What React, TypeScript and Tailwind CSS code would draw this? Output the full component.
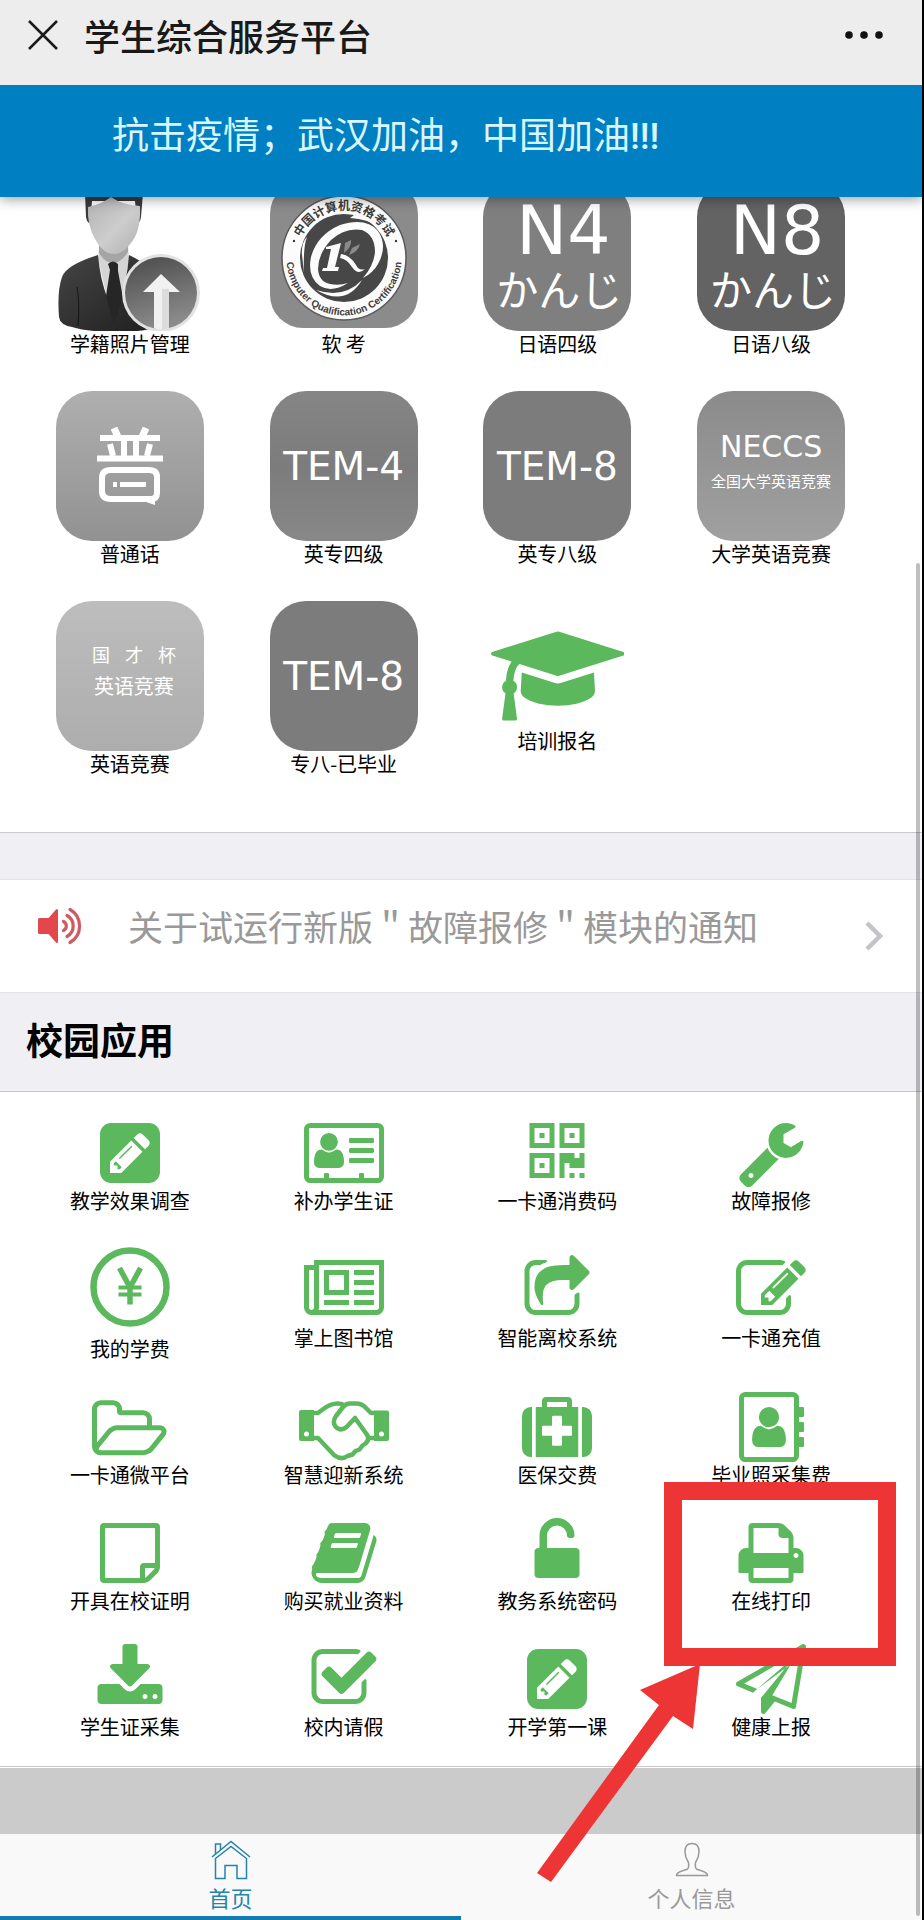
import type { ReactNode } from 'react';

type IconShape = {
  width: number;
  path: string;
};

// Every glyph sits on a grid that is 1792 units tall.
const icons: Record<string, IconShape> = {
  cap: {
    width: 2304,
    path: 'M1774 836l18 316q4 69-82 128t-235 93.5-323 34.5-323-34.5-235-93.5-82-128l18-316 574 181q22 7 48 7t48-7zm530-324q0 23-22 31l-1120 352q-4 1-10 1t-10-1l-652-206q-43 34-71 111.5t-34 178.5q63 36 63 109 0 69-58 107l58 433q2 14-8 25-9 11-24 11h-192q-15 0-24-11-10-11-8-25l58-433q-58-38-58-107 0-73 65-111 11-207 98-330l-333-104q-22-8-22-31t22-31l1120-352q4-1 10-1t10 1l1120 352q22 8 22 31z',
  },
  pencilSquare: {
    width: 1536,
    path: 'M404 1108l152 152-52 52h-56v-96h-96v-56zm414-390q14 13-3 30l-291 291q-17 17-30 3-14-13 3-30l291-291q17-17 30-3zm-274 690l544-544-288-288-544 544v288h288zm608-608l92-92q28-28 28-68t-28-68l-152-152q-28-28-68-28t-68 28l-92 92zm384-384v960q0 119-84.5 203.5t-203.5 84.5h-960q-119 0-203.5-84.5t-84.5-203.5v-960q0-119 84.5-203.5t203.5-84.5h960q119 0 203.5 84.5t84.5 203.5z',
  },
  idCard: {
    width: 2048,
    path: 'M1024 1131q0-64-9-117.5t-29.5-103-60.5-78-97-28.5q-6 4-30 18t-37.5 21.5-35.5 17.5-43 14.5-42 4.5-42-4.5-43-14.5-35.5-17.5-37.5-21.5-30-18q-57 0-97 28.5t-60.5 78-29.5 103-9 117.5 37 106.5 91 42.5h512q54 0 91-42.5t37-106.5zm-157-520q0-94-66.5-160.5t-160.5-66.5-160.5 66.5-66.5 160.5 66.5 160.5 160.5 66.5 160.5-66.5 66.5-160.5zm925 509v-64q0-14-9-23t-23-9h-576q-14 0-23 9t-9 23v64q0 14 9 23t23 9h576q14 0 23-9t9-23zm0-260v-56q0-15-10.5-25.5t-25.5-10.5h-568q-15 0-25.5 10.5t-10.5 25.5v56q0 15 10.5 25.5t25.5 10.5h568q15 0 25.5-10.5t10.5-25.5zm0-252v-64q0-14-9-23t-23-9h-576q-14 0-23 9t-9 23v64q0 14 9 23t23 9h576q14 0 23-9t9-23zM1920 288v1216q0 13-9.500 22.500t-22.500 9.500h-352v-96q0-14-9-23t-23-9h-64q-14 0-23 9t-9 23v96h-768v-96q0-14-9-23t-23-9h-64q-14 0-23 9t-9 23v96h-352q-13 0-22.500-9.500t-9.500-22.500v-1216q0-13 9.500-22.500t22.500-9.500h1728q13 0 22.500 9.500t9.500 22.500zM2048 288v1216q0 66-47 113t-113 47h-1728q-66 0-113-47t-47-113v-1216q0-66 47-113t113-47h1728q66 0 113 47t47 113z',
  },
  qrcode: {
    width: 1792,
    path: 'M576 1152v128h-128v-128h128zm0-768v128h-128v-128h128zm768 0v128h-128v-128h128zm-1024 1023h384v-383h-384v383zm0-767h384v-384h-384v384zm768 0h384v-384h-384v384zm-256 256v640h-640v-640h640zm512 512v128h-128v-128h128zm256 0v128h-128v-128h128zm0-512v384h-384v-128h-128v384h-128v-640h384v128h128v-128h128zm-768-768v640h-640v-640h640zm768 0v640h-640v-640h640z',
  },
  wrench: {
    width: 1792,
    path: 'M448 1472q0-26-19-45t-45-19-45 19-19 45 19 45 45 19 45-19 19-45zm644-420l-682 682q-37 37-90 37-52 0-91-37l-106-108q-38-36-38-90 0-53 38-91l681-681q39 98 114.5 173.5t173.5 114.5zm634-435q0 39-23 106-47 134-164.5 217.5t-258.5 83.5q-185 0-316.5-131.5t-131.5-316.5 131.5-316.5 316.500-131.5q58 0 121.5 16.5t107.5 46.500q16 11 16 28t-16 28l-293 169v224l193 107q5-3 79-48.5t135.5-81 70.5-35.5q15 0 23.500 10t8.500 25z',
  },
  newspaper: {
    width: 2048,
    path: 'M1024 512h-384v384h384v-384zm128 640v128h-640v-128h640zm0-768v640h-640v-640h640zm640 768v128h-512v-128h512zm0-256v128h-512v-128h512zm0-256v128h-512v-128h512zm0-256v128h-512v-128h512zm-1536 960v-960h-128v960q0 26 19 45t45 19 45-19 19-45zm1664 0v-1088h-1536v1088q0 33-11 64h1483q26 0 45-19t19-45zm128-1216v1216q0 80-56 136t-136 56h-1664q-80 0-136-56t-56-136v-1088h256v-128h1792z',
  },
  share: {
    width: 1792,
    path: 'M1472 989v259q0 119-84.5 203.5t-203.5 84.5h-832q-119 0-203.5-84.5t-84.5-203.5v-832q0-119 84.5-203.5t203.5-84.5h255q13 0 22.5 9.5t9.5 22.5q0 27-26 32-77 26-133 60-10 4-16 4h-112q-66 0-113 47t-47 113v832q0 66 47 113t113 47h832q66 0 113-47t47-113v-214q0-19 18-29 28-13 54-37 16-16 35-8 21 9 21 29zm237-496l-384 384q-18 19-45 19-12 0-25-5-39-17-39-59v-192h-160q-323 0-438 131-119 137-74 473 3 23-20 34-8 2-12 2-16 0-26-13-10-14-21-31t-39.5-68.5-49.5-99.5-38.5-114-17.5-122q0-49 3.5-91t14-90 28-88 47-81.5 68.5-74 94.5-61.5 124.5-48.5 159.5-30.5 196.5-11h160v-192q0-42 39-59 13-5 25-5 26 0 45 19l384 384q19 19 19 45t-19 45z',
  },
  edit: {
    width: 1792,
    path: 'M888 1184l116-116-152-152-116 116v56h96v96h56zm440-720q-16-16-33 1l-350 350q-17 17-1 33t33-1l350-350q17-17 1-33zm80 594v190q0 119-84.5 203.5t-203.5 84.5h-832q-119 0-203.5-84.5t-84.5-203.5v-832q0-119 84.5-203.5t203.5-84.5h832q63 0 117 25 15 7 18 23 3 17-9 29l-49 49q-14 14-32 8-23-6-45-6h-832q-66 0-113 47t-47 113v832q0 66 47 113t113 47h832q66 0 113-47t47-113v-126q0-13 9-22l64-64q15-15 35-7t20 29zm-96-738l288 288-672 672h-288v-288zm444 132l-92 92-288-288 92-92q28-28 68-28t68 28l152 152q28 28 28 68t-28 68z',
  },
  folder: {
    width: 1920,
    path: 'M1781 1013q0-31-53-31h-1088q-40 0-85.5 21.5t-71.5 52.5l-294 363q-18 24-18 40 0 31 53 31h1088q40 0 86-22t71-53l294-363q18-22 18-39zm-1141-159h768v-160q0-40-28-68t-68-28h-576q-40 0-68-28t-28-68v-64q0-40-28-68t-68-28h-320q-40 0-68 28t-28 68v853l256-315q44-53 116-87.5t140-34.5zm1269 159q0 62-46 120l-295 363q-43 53-116 87.5t-140 34.5h-1088q-92 0-158-66t-66-158v-960q0-92 66-158t158-66h320q92 0 158 66t66 158v32h544q92 0 158 66t66 158v160h192q54 0 99 24.5t67 70.5q15 32 15 68z',
  },
  medkit: {
    width: 1792,
    path: 'M1280 1088v-192q0-14-9-23t-23-9h-224v-224q0-14-9-23t-23-9h-192q-14 0-23 9t-9 23v224h-224q-14 0-23 9t-9 23v192q0 14 9 23t23 9h224v224q0 14 9 23t23 9h192q14 0 23-9t9-23v-224h224q14 0 23-9t9-23zm-640-704h512v-128h-512v128zm-384 0v1280h-32q-92 0-158-66t-66-158v-832q0-92 66-158t158-66h32zm1184 0v1280h-1088v-1280h160v-160q0-40 28-68t68-28h576q40 0 68 28t28 68v160h160zm352 224v832q0 92-66 158t-158 66h-32v-1280h32q92 0 158 66t66 158z',
  },
  addressBook: {
    width: 1664,
    path: 'M1028 644q0 107-76.5 183t-183.5 76-183.5-76-76.5-183q0-108 76.5-184t183.5-76 183.5 76 76.5 184zm-48 220q46 0 82.5 17t60 47.5 39.5 67 24 81 11.5 82.5 3.5 79q0 67-39.5 118.5t-105.5 51.5h-576q-66 0-105.5-51.5t-39.5-118.5q0-48 4.5-93.5t18.5-98.5 36.5-91.5 63-64.5 93.5-26h5q7 4 32 19.5t35.5 21 33 17 37 16 35 9 39.5 4.5 39.5-4.5 35-9 37-16 33-17 35.5-21 32-19.5zm684-256q0 13-9.5 22.5t-22.5 9.5h-96v128h96q13 0 22.5 9.5t9.5 22.5v192q0 13-9.5 22.5t-22.5 9.5h-96v128h96q13 0 22.5 9.5t9.5 22.5v192q0 13-9.5 22.5t-22.5 9.5h-96v224q0 66-47 113t-113 47h-1216q-66 0-113-47t-47-113v-1472q0-66 47-113t113-47h1216q66 0 113 47t47 113v224h96q13 0 22.5 9.5t9.5 22.5v192zm-256 1024v-1472q0-13-9.5-22.5t-22.5-9.5h-1216q-13 0-22.5 9.5t-9.5 22.5v1472q0 13 9.5 22.5t22.5 9.5h1216q13 0 22.5-9.5t9.5-22.5z',
  },
  note: {
    width: 1536,
    path: 'M1400 1280h-248v248q29-10 41-22l185-185q12-12 22-41zm-280-128h288v-896h-1280v1280h896v-288q0-40 28-68t68-28zm416-928v1024q0 40-20 88t-48 76l-184 184q-28 28-76 48t-88 20h-1024q-40 0-68-28t-28-68v-1344q0-40 28-68t68-28h1344q40 0 68 28t28 68z',
  },
  book: {
    width: 1792,
    path: 'M1703 478q40 57 18 129l-275 906q-19 64-76.5 107.5t-122.5 43.5h-923q-77 0-148.5-53.5t-99.5-131.5q-24-67-2-127 0-4 3-27t4-37q1-8-3-21.5t-3-19.5q2-11 8-21t16.5-23.5 16.5-23.5q23-38 45-91.5t30-91.5q3-10 .5-30t-.5-28q3-11 17-28t17-23q21-36 42-92t25-90q1-9-2.5-32t.5-28q4-13 22-30.5t22-22.5q19-26 42.5-84.5t27.5-96.5q1-8-3-25.5t-2-26.5q2-8 9-18t18-23 17-21q8-12 16.5-30.5t15-35 16-36 19.5-32 26.5-23.5 36-11.5 47.5 5.5l-1 3q38-9 51-9h761q74 0 114 56t18 130l-274 906q-36 119-71.5 153.5t-128.5 34.5h-869q-27 0-38 15-11 16-1 43 24 70 144 70h923q29 0 56-15.5t35-41.5l300-987q7-22 5-57 38 15 59 43zm-1064 2q-4 13 2 22.5t20 9.5h608q13 0 25.5-9.5t16.5-22.5l21-64q4-13-2-22.5t-20-9.5h-608q-13 0-25.5 9.5t-16.5 22.5zm-83 256q-4 13 2 22.5t20 9.5h608q13 0 25.5-9.5t16.5-22.5l21-64q4-13-2-22.5t-20-9.5h-608q-13 0-25.5 9.5t-16.5 22.5z',
  },
  unlock: {
    width: 1792,
    path: 'M1376 768q40 0 68 28t28 68v576q0 40-28 68t-68 28h-960q-40 0-68-28t-28-68v-576q0-40 28-68t68-28h32v-320q0-185 131.5-316.5t316.5-131.5 316.5 131.5 131.5 316.5q0 26-19 45t-45 19h-64q-26 0-45-19t-19-45q0-106-75-181t-181-75-181 75-75 181v320h736z',
  },
  print: {
    width: 1792,
    path: 'M448 1536h896v-256h-896v256zm0-640h896v-384h-160q-40 0-68-28t-28-68v-160h-640v640zm1152 64q0-26-19-45t-45-19-45 19-19 45 19 45 45 19 45-19 19-45zm128 0v416q0 13-9.5 22.5t-22.5 9.5h-224v160q0 40-28 68t-68 28h-960q-40 0-68-28t-28-68v-160h-224q-13 0-22.5-9.5t-9.5-22.5v-416q0-79 56.5-135.5t135.5-56.5h64v-544q0-40 28-68t68-28h672q40 0 88 20t76 48l152 152q28 28 48 76t20 88v256h64q79 0 135.5 56.5t56.5 135.5z',
  },
  download: {
    width: 1792,
    path: 'M1344 1344q0-26-19-45t-45-19-45 19-19 45 19 45 45 19 45-19 19-45zm256 0q0-26-19-45t-45-19-45 19-19 45 19 45 45 19 45-19 19-45zm128-224v320q0 40-28 68t-68 28h-1472q-40 0-68-28t-28-68v-320q0-40 28-68t68-28h465l135 136q58 56 136 56t136-56l136-136h464q40 0 68 28t28 68zm-325-569q17 41-14 70l-448 448q-18 19-45 19t-45-19l-448-448q-31-29-14-70 17-39 59-39h256v-448q0-26 19-45t45-19h256q26 0 45 19t19 45v448h256q42 0 59 39z',
  },
  check: {
    width: 1792,
    path: 'M1472 930v318q0 119-84.5 203.5t-203.5 84.5h-832q-119 0-203.5-84.5t-84.5-203.5v-832q0-119 84.5-203.5t203.5-84.5h832q63 0 117 25 15 7 18 23 3 17-9 29l-49 49q-10 10-23 10-3 0-9-2-23-6-45-6h-832q-66 0-113 47t-47 113v832q0 66 47 113t113 47h832q66 0 113-47t47-113v-254q0-13 9-22l64-64q10-10 23-10 6 0 12 3 20 8 20 29zm231-489l-814 814q-24 24-57 24t-57-24l-430-430q-24-24-24-57t24-57l110-110q24-24 57-24t57 24l263 263 647-647q24-24 57-24t57 24l110 110q24 24 24 57t-24 57z',
  },
  plane: {
    width: 1792,
    path: 'M1764 11q33 24 27 64l-256 1536q-5 29-32 45-14 8-31 8-11 0-24-5l-453-185-242 295q-18 23-49 23-13 0-22-4-19-7-30.5-23.5t-11.5-36.500v-349l864-1059-1069 925-395-162q-37-14-40-55-2-40 32-59l1664-960q15-9 32-9 20 0 36 11zm-342 1499l221-1323-1434 827 336 137 863-639-478 797z',
  },
};

function Glyph({ name, className = 'h-[70px]' }: { name: string; className?: string }) {
  const { width, path } = icons[name];
  return (
    <svg viewBox={`0 0 ${width} 1792`} className={`${className} w-auto fill-[#5cb85c]`} aria-hidden="true">
      <path fillRule="evenodd" d={path} />
    </svg>
  );
}

function YenIcon() {
  return (
    <svg viewBox="0 0 80 92" className="h-[92px] w-20" fill="none" stroke="#5cb85c" aria-hidden="true">
      <circle cx="40" cy="43" r="36.500" strokeWidth="6.500" />
      <path d="M29.500 24L40 43.500L50.500 24M40 42V60.500" strokeWidth="5.500" />
      <path d="M28.500 43.500h23M28.500 50.500h23" strokeWidth="4" />
    </svg>
  );
}

function HandshakeIcon() {
  return (
    <svg viewBox="0 0 90 70" className="h-[70px] w-[90px]" aria-hidden="true">
      <path
        fill="#5cb85c"
        fillRule="evenodd"
        d="M2 18h13v31H2q-2 0-2-2V20q0-2 2-2zm5.500 21.500a2.500 2.500 0 100 5 2.500 2.500 0 000-5zM75 18.500h13q2 0 2 2V47q0 2-2 2H75zm7.500 21a2.500 2.500 0 100 5 2.500 2.500 0 000-5z"
      />
      <g fill="none" stroke="#5cb85c" strokeWidth="4.500" strokeLinejoin="round" strokeLinecap="round">
        <path d="M15 21h4l4-3q8-6.500 16-6.500 3 0 6 1.500" />
        <path d="M75 21h-3l-5-5q-4-4.500-10-4.500h-6q-4 0-7 3.500l-7 9q-4 6-.5 10.500 5 5.500 11 .5l8.500-9 11.500 16q4 5-1 9.500l-3 2-3 4-4 1.500-3 3.500-5 1.500q-6 4.500-13-.5L19 46h-4" />
        <path d="M69 46h6" />
      </g>
    </svg>
  );
}

function PortraitIcon() {
  return (
    <svg viewBox="0 0 148 150" className="h-[150px] w-[148px]" aria-hidden="true">
      <defs>
        <linearGradient id="face" x1="0" y1="0" x2="1" y2="1">
          <stop offset="0" stopColor="#b2b2b2" />
          <stop offset="0.550" stopColor="#cdcdcd" />
          <stop offset="1" stopColor="#b0b0b0" />
        </linearGradient>
        <linearGradient id="suit" x1="0" y1="0" x2="1" y2="1">
          <stop offset="0" stopColor="#454545" />
          <stop offset="1" stopColor="#1e1e1e" />
        </linearGradient>
        <linearGradient id="badge" x1="0" y1="0" x2="0.300" y2="1">
          <stop offset="0" stopColor="#4a4a4a" />
          <stop offset="1" stopColor="#8a8a8a" />
        </linearGradient>
      </defs>
      <path d="M43 64L72 64L73 78L66 125H53L42 78z" fill="#d5d5d5" />
      <path d="M43 62h29v9q-7 11-15 11t-14-10z" fill="#a5a5a5" />
      <path d="M42 74Q10 84 6 96Q1 110 3 136Q4 144 16 146Q32 151 62 151Q88 151 104 145L102 92Q86 80 73 74Q71 100 63 127L52 119Q44 98 42 74z" fill="url(#suit)" />
      <path d="M21 106q3 16 1 39" stroke="#151515" strokeWidth="1" fill="none" />
      <path d="M52 83q5-5 10 0v7l5 27-9 26-8-28 4-26z" fill="#262626" />
      <path d="M29 12Q30 0 58 0Q86 0 87 12L85 36Q84 42 81 42L79 20H36L34 42Q31 42 30 36z" fill="#3a3a3a" />
      <path d="M32 26Q46 23 55 16Q66 24 84 25Q85 44 79 56Q69 73 58 73Q47 73 39 58Q31 44 32 26z" fill="url(#face)" />
      <circle cx="105" cy="112" r="39" fill="#e2e2e2" />
      <circle cx="105" cy="112" r="36" fill="url(#badge)" />
      <path d="M105 93L124 111H113V147Q106 150 98 147V111H87z" fill="#f1f1f1" />
      <path d="M106 108h7v39l-7 2z" fill="#dcdcdc" />
    </svg>
  );
}

function SealIcon() {
  return (
    <svg viewBox="0 0 148 150" className="h-[150px] w-[148px]" aria-hidden="true">
      <defs>
        <path id="sealTop" d="M26 77A48 48 0 0 1 122 77" />
        <path id="sealBottom" d="M16.500 77A57.500 57.500 0 0 0 131.500 77" />
      </defs>
      <rect width="148" height="147" rx="33" fill="#8b8b8b" />
      <circle cx="74" cy="77" r="62" fill="#fcfcfc" stroke="#5a5a5a" strokeWidth="1.500" />
      <circle cx="74" cy="77" r="44" fill="#474747" />
      <g fill="#3d3d3d" textAnchor="middle">
        <text className="font-['Noto_Sans_CJK_SC',sans-serif] text-[12px] font-bold">
          <textPath href="#sealTop" startOffset="50%">中国计算机资格考试</textPath>
        </text>
        <text className="font-['Liberation_Sans',sans-serif] text-[10px] font-bold">
          <textPath href="#sealBottom" startOffset="50%">Computer Qualification Certification</textPath>
        </text>
      </g>
      <circle cx="24" cy="60" r="1.200" fill="#3d3d3d" />
      <circle cx="126" cy="60" r="1.200" fill="#3d3d3d" />
      {/* slanted ring around the monogram, open at its lower right */}
      <path
        fill="#fcfcfc"
        fillRule="evenodd"
        d="M78 102Q62 112 50 105Q37 96 41 76Q47 54 70 44Q96 36 108 50Q118 65 108 83Q103 92 93 97Q104 84 105 71Q105 54 92 49Q75 46 61 59Q48 73 48 88Q49 101 60 103Q69 105 78 102z"
      />
      <path d="M84 34Q100 36 109 46Q98 38 80 37zM32 74Q31 62 37 56Q33 66 34 92zM46 109Q74 118 92 99Q76 126 46 109z" fill="#fcfcfc" />
      <path d="M56 66L71 62L65 86H69L68 90H52L53 87H57L61 68H56z" fill="#fcfcfc" />
      <path d="M71 73Q80 74 86 84Q89 90 95 88Q88 95 82 86Q77 78 70 77z" fill="#fcfcfc" />
      <path d="M75 62L81 59Q82 66 74 72zM82 67L90 63Q88 71 79 74z" fill="#8a8a8a" />
    </svg>
  );
}

function PuIcon() {
  return (
    <svg viewBox="0 0 66 78" className="h-[78px] w-[66px]" aria-hidden="true">
      <g fill="none" stroke="#fff">
        <path d="M3 11h60M0 31.500h66" strokeWidth="6" />
        <path d="M17 1l4 9M45 10l4-9" strokeWidth="7" />
        <path d="M27 11v20M39 11v20" strokeWidth="6" />
        <path d="M13 17l3 12M53 17l-3 12" strokeWidth="6" />
        <path d="M14 43h38q8 0 8 7v16q0 6-6 6H14q-9 0-9-8V51q0-8 9-8z" strokeWidth="6" />
        <path d="M16 57.500h4M23 57.500h26" strokeWidth="5" />
      </g>
      <path d="M40 72h18v6z" fill="#fff" />
    </svg>
  );
}

function Tile({ tone, children }: { tone: string; children: ReactNode }) {
  return (
    <span className={`flex h-[150px] w-[148px] flex-col items-center justify-center rounded-[36px] text-white ${tone}`}>
      {children}
    </span>
  );
}

function KanjiTile({ level, tone }: { level: string; tone: string }) {
  return (
    <Tile tone={tone}>
      <span className="pt-0.5 pl-3 font-['DejaVu_Sans',sans-serif] text-[68px] leading-[62px]">{level}</span>
      <span className="pl-1 font-['Noto_Sans_CJK_JP',sans-serif] text-[42px] leading-[52px]">かんじ</span>
    </Tile>
  );
}

function TemTile({ text, tone }: { text: string; tone: string }) {
  return (
    <Tile tone={tone}>
      <span className="font-['DejaVu_Sans',sans-serif] text-[39px] leading-none">{text}</span>
    </Tile>
  );
}

type App = {
  label: string;
  icon: ReactNode;
  highlighted?: boolean;
};

const exams: App[] = [
  { label: '学籍照片管理', icon: <PortraitIcon /> },
  { label: '软 考', icon: <SealIcon /> },
  { label: '日语四级', icon: <KanjiTile level="N4" tone="bg-[#7f7f7f]" /> },
  { label: '日语八级', icon: <KanjiTile level="N8" tone="bg-[#636363]" /> },
  {
    label: '普通话',
    icon: (
      <Tile tone="bg-linear-to-b from-[#afafaf] to-[#929292]">
        <PuIcon />
      </Tile>
    ),
  },
  { label: '英专四级', icon: <TemTile text="TEM-4" tone="bg-linear-to-b from-[#858585] via-[#7c7c7c] to-[#888888]" /> },
  { label: '英专八级', icon: <TemTile text="TEM-8" tone="bg-[#7c7c7c]" /> },
  {
    label: '大学英语竞赛',
    icon: (
      <Tile tone="bg-linear-to-b from-[#8b8b8b] to-[#a0a0a0]">
        <span className="font-['DejaVu_Sans',sans-serif] text-[30px] leading-[38px]">NECCS</span>
        <span className="pb-2 text-[15px] leading-[30px]">全国大学英语竞赛</span>
      </Tile>
    ),
  },
  {
    label: '英语竞赛',
    icon: (
      <Tile tone="bg-linear-to-b from-[#bdbdbd] to-[#adadad]">
        <span className="ml-2 flex w-[84px] justify-between text-[18px] leading-8">
          <span>国</span>
          <span>才</span>
          <span>杯</span>
        </span>
        <span className="pb-3 pl-2 text-[20px] leading-8">英语竞赛</span>
      </Tile>
    ),
  },
  { label: '专八-已毕业', icon: <TemTile text="TEM-8" tone="bg-[#7c7c7c]" /> },
  { label: '培训报名', icon: <Glyph name="cap" className="h-[104px]" /> },
];

const campusApps: App[] = [
  { label: '教学效果调查', icon: <Glyph name="pencilSquare" /> },
  { label: '补办学生证', icon: <Glyph name="idCard" /> },
  { label: '一卡通消费码', icon: <Glyph name="qrcode" /> },
  { label: '故障报修', icon: <Glyph name="wrench" /> },
  { label: '我的学费', icon: <YenIcon /> },
  { label: '掌上图书馆', icon: <Glyph name="newspaper" /> },
  { label: '智能离校系统', icon: <Glyph name="share" /> },
  { label: '一卡通充值', icon: <Glyph name="edit" /> },
  { label: '一卡通微平台', icon: <Glyph name="folder" /> },
  { label: '智慧迎新系统', icon: <HandshakeIcon /> },
  { label: '医保交费', icon: <Glyph name="medkit" /> },
  { label: '毕业照采集费', icon: <Glyph name="addressBook" /> },
  { label: '开具在校证明', icon: <Glyph name="note" /> },
  { label: '购买就业资料', icon: <Glyph name="book" /> },
  { label: '教务系统密码', icon: <Glyph name="unlock" /> },
  { label: '在线打印', icon: <Glyph name="print" />, highlighted: true },
  { label: '学生证采集', icon: <Glyph name="download" /> },
  { label: '校内请假', icon: <Glyph name="check" /> },
  { label: '开学第一课', icon: <Glyph name="pencilSquare" /> },
  { label: '健康上报', icon: <Glyph name="plane" /> },
];

function AppLink({ app }: { app: App }) {
  return (
    <a href="#" className="relative flex flex-col items-center text-[20px] leading-[26px] text-black">
      {app.icon}
      <span className="whitespace-nowrap">{app.label}</span>
      {app.highlighted && (
        <>
          <span className="absolute -top-9 -right-[18px] -bottom-[52px] left-0 z-20 border-[18px] border-[#ee3535]" />
          <svg
            viewBox="0 0 164 218"
            className="absolute top-[146px] -left-[127px] z-20 h-[218px] w-[164px] fill-[#ee3535]"
            aria-hidden="true"
          >
            <path d="M163 0L156 65L136 52L14 218L0 209L122 41L103 26z" />
          </svg>
        </>
      )}
    </a>
  );
}

export default function App() {
  return (
    <div className="relative overflow-hidden border-r-2 border-black bg-white font-['Noto_Sans_CJK_SC',sans-serif]">
      <header className="relative z-10 shadow-[0_2px_12px_rgba(0,0,0,0.4)]">
        <div className="flex h-[85px] items-center bg-[#ededed] pr-[38px] pb-4 pl-7">
          <button type="button" aria-label="关闭">
            <svg viewBox="0 0 30 30" className="size-[30px]" stroke="#1a1a1a" strokeWidth="2.500" aria-hidden="true">
              <path d="M1 1L29 29M29 1L1 29" />
            </svg>
          </button>
          <h1 className="flex-1 pl-[26px] text-[36px] leading-[48px] font-medium text-[#191919]">学生综合服务平台</h1>
          <button type="button" aria-label="更多">
            <svg viewBox="0 0 40 10" className="h-[10px] w-10" fill="#111" aria-hidden="true">
              <circle cx="5" cy="5" r="3.800" />
              <circle cx="20" cy="5" r="3.800" />
              <circle cx="35" cy="5" r="3.800" />
            </svg>
          </button>
        </div>
        <p className="h-28 bg-[#0080c2] pt-[22px] pl-28 text-[37px] leading-[52px] whitespace-nowrap text-[#d9f6ff]">
          抗击疫情；武汉加油，中国加油
          <span className="font-['Roboto',sans-serif] font-medium">!!!</span>
        </p>
      </header>

      <main>
        {/* exam registration, scrolled partly under the header */}
        <section className="-mt-4 grid grid-cols-4 items-center gap-y-[34px] border-b border-[#c8c7cc] pr-11 pb-[55px] pl-[23px]">
          {exams.map((app) => (
            <AppLink key={app.label} app={app} />
          ))}
        </section>

        <div className="h-[46px] bg-[#efeff4]" />

        <a href="#" className="flex h-[114px] items-center border-y border-[#e4e4e8] bg-white pr-[38px] pl-9">
          <svg viewBox="0 0 48 40" className="mb-5 h-10 w-12" aria-hidden="true">
            <path
              d="M3.500 12h9L20 3.500q2-1.500 2 1v31q0 2.500-2 1L12.500 28h-9q-1.500 0-1.500-1.500v-13Q2 12 3.500 12z"
              fill="#e2474b"
            />
            <path
              d="M27.500 15.500a5 5 0 010 9M31 9.500a12 12 0 010 21M34 3.500a19 19 0 010 33"
              fill="none"
              stroke="#cf5a60"
              strokeWidth="3.200"
              strokeLinecap="round"
            />
          </svg>
          <span className="mb-5 flex-1 pl-11 text-[35px] leading-[48px] whitespace-nowrap text-[#999]">
            关于试运行新版＂故障报修＂模块的通知
          </span>
          <svg viewBox="0 0 20 30" className="h-[30px] w-5" fill="none" stroke="#c4c4c8" strokeWidth="4.500" aria-hidden="true">
            <path d="M3 2L16 15L3 28" />
          </svg>
        </a>

        <h2 className="h-[99px] border-b border-[#c8c7cc] bg-[#efeff4] pt-5 pl-[26px] text-[37px] leading-[52px] font-bold text-black">
          校园应用
        </h2>

        <section className="grid grid-cols-4 items-center gap-y-[30px] border-b border-[#c8c7cc] pt-[26px] pr-11 pb-[26px] pl-[23px]">
          {campusApps.map((app) => (
            <AppLink key={app.label} app={app} />
          ))}
        </section>

        <div className="mt-px h-[66px] bg-[#cbcbcb]" />
      </main>

      <nav className="grid grid-cols-2 bg-[#f9f9f9] text-[22px] leading-[26px]">
        <a href="#" aria-current="page" className="flex h-[86px] flex-col items-center gap-1 border-b-4 border-[#107cb0] pt-1.5 text-[#2484ab]">
          <svg viewBox="0 0 40 40" className="size-10" fill="none" stroke="currentColor" strokeWidth="1.500" aria-hidden="true">
            <path d="M1 17L20 1.500L39 17" />
            <path d="M4.500 18.500L20 6.500L35.500 18.500V38.500H26V25.500H14V38.500H4.500z" />
            <path d="M4.500 14V4H9.500V10" />
          </svg>
          首页
        </a>
        <a href="#" className="flex h-[86px] flex-col items-center gap-1 pt-1.5 text-[#999]">
          <svg viewBox="0 0 40 40" className="size-10" fill="none" stroke="currentColor" strokeWidth="1.500" aria-hidden="true">
            <path d="M20 3.500C24.500 3.500 27 6.500 27 11.500C27 16 26 18.500 24 21.500C23 23 23 28 24.500 29C28 31 35.500 31 35.500 35.500H4.500C4.500 31 12 31 15.500 29C17 28 17 23 16 21.500C14 18.500 13 16 13 11.500C13 6.500 15.500 3.500 20 3.500z" />
          </svg>
          个人信息
        </a>
      </nav>

      {/* scroll thumb */}
      <div className="absolute top-[563px] right-0.5 bottom-1 w-1 rounded-full bg-black/25" />
    </div>
  );
}
